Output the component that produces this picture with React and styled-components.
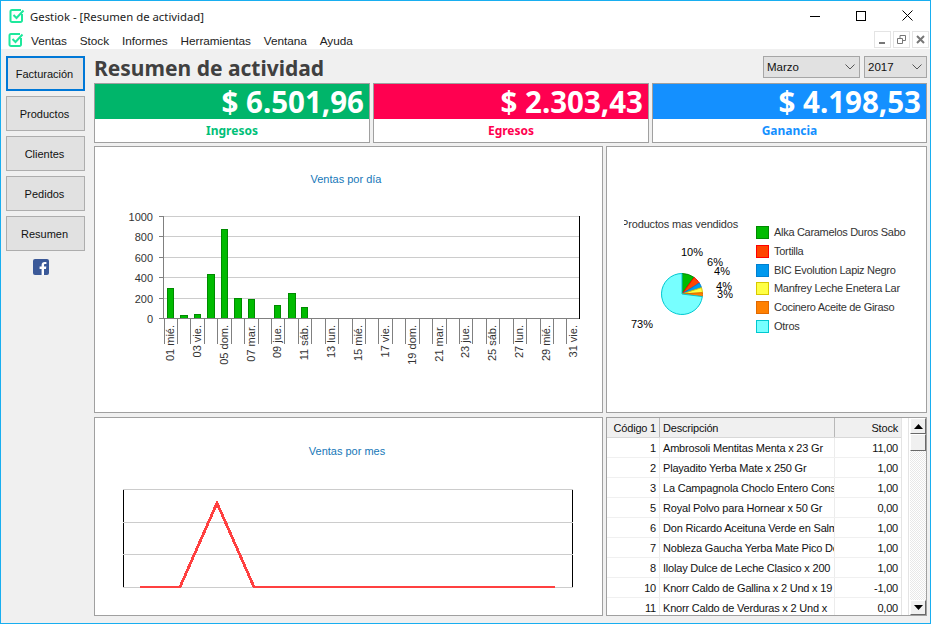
import React from 'react';
import styled, { createGlobalStyle } from 'styled-components';

const UI_FONT = '"Liberation Sans", Arial, sans-serif';
const HEAD_FONT = '"Noto Sans", "DejaVu Sans", sans-serif';

const GlobalStyle = createGlobalStyle`
  html, body { margin: 0; padding: 0; background: #f0f0f0; }
  body { font-family: ${UI_FONT}; font-size: 11px; color: #222; }
  * { box-sizing: border-box; }
`;

const Window = styled.div`
  width: 931px;
  height: 624px;
  border: 1px solid #18aef0;
  display: flex;
  flex-direction: column;
  overflow: hidden;
  background: #fff;
`;

const TitleBar = styled.div`
  height: 29px;
  display: flex;
  align-items: center;
  padding-left: 8px;
  padding-top: 1px;
  background: #fff;
  font-family: ${HEAD_FONT};
  font-size: 11.35px;
`;

const TitleText = styled.span`
  margin-left: 5px;
  flex: 1;
  color: #222;
`;

const WinButton = styled.div`
  width: 46px;
  height: 29px;
  display: flex;
  align-items: center;
  justify-content: center;
  margin-top: -1px;
`;

const MenuBar = styled.div`
  height: 19px;
  display: flex;
  align-items: center;
  padding-left: 7px;
  background: #fff;
`;

const MenuItem = styled.span`
  margin-left: ${p => p.$first ? '7px' : '13px'};
  margin-top: 2px;
  font-size: 11.8px;
  letter-spacing: -0.05px;
  color: #222;
`;

const MdiButtons = styled.div`
  margin-left: auto;
  display: flex;
  gap: 2px;
  margin-right: 1px;
`;

const MdiButton = styled.div`
  width: 17px;
  height: 17px;
  border: 1px solid #e4e4e4;
  display: flex;
  align-items: center;
  justify-content: center;
`;

const Body = styled.div`
  flex: 1;
  display: flex;
  background: #f0f0f0;
  min-height: 0;
`;

const Sidebar = styled.div`
  width: 93px;
  padding: 7px 0 0 5px;
  display: flex;
  flex-direction: column;
  gap: 5px;
`;

const NavButton = styled.div`
  width: 79px;
  height: 35px;
  background: #e1e1e1;
  border: ${p => p.$active ? '2px solid #0078d7' : '1px solid #adadad'};
  display: flex;
  align-items: center;
  justify-content: center;
  padding-right: 2px;
  color: #111;
  font-size: 11px;
`;

const SocialLink = styled.div`
  width: 79px;
  height: 20px;
  padding-left: 27px;
  margin-top: 3px;
`;

const Main = styled.div`
  width: 833px;
  padding-top: 7px;
  display: flex;
  flex-direction: column;
`;

const Header = styled.div`
  height: 22px;
  display: flex;
  align-items: center;
  margin-bottom: 5px;
`;

const Heading = styled.h1`
  margin: 2px 0 0;
  flex: 1;
  font-family: ${HEAD_FONT};
  font-size: 21px;
  line-height: 22px;
  font-weight: 700;
  color: #404040;
`;

const Combo = styled.div`
  width: ${p => p.$w}px;
  height: 22px;
  margin-left: 4px;
  background: #e1e1e1;
  border: 1px solid #a6a6a6;
  display: flex;
  align-items: center;
  justify-content: space-between;
  padding: 0 4px 0 3px;
  font-size: 11.5px;
  color: #111;
`;

const KpiRow = styled.div`
  display: grid;
  grid-template-columns: 276px 276px 275px;
  gap: 3px;
  height: 60px;
  margin-bottom: 3px;
`;

const Kpi = styled.div`
  border: 1px solid #a0a0a0;
  background: #fff;
  display: flex;
  flex-direction: column;
`;

const KpiAmount = styled.div`
  height: 35px;
  background: ${p => p.$color};
  color: #fff;
  font-family: ${HEAD_FONT};
  font-size: 29.5px;
  font-weight: 700;
  line-height: 35px;
  text-align: right;
  padding-right: 5px;
  white-space: nowrap;
`;

const KpiLabel = styled.div`
  flex: 1;
  display: flex;
  align-items: center;
  justify-content: center;
  font-family: ${HEAD_FONT};
  font-size: 12px;
  font-weight: 700;
  color: ${p => p.$color};
`;

const Panels = styled.div`
  display: grid;
  grid-template-columns: 509px 321px;
  grid-template-rows: 267px 199px;
  column-gap: 3px;
  row-gap: 4px;
`;

const Panel = styled.div`
  border: 1px solid #a0a0a0;
  background: #fff;
  overflow: hidden;
  display: flex;
`;

const TableArea = styled.div`
  width: 295px;
  overflow: hidden;
  border-right: 1px solid #e4e4e4;
`;

const Row = styled.div`
  height: 20px;
  display: grid;
  grid-template-columns: 53px 175px 66px;
  background: ${p => p.$head ? '#f0f0f0' : '#fff'};
  border-bottom: 1px solid ${p => p.$head ? '#d8d8d8' : '#f0f0f0'};
`;

const Cell = styled.div`
  line-height: 18px;
  font-size: 11px;
  letter-spacing: -0.2px;
  color: #111;
  padding: 1px 3px 0;
  overflow: hidden;
  white-space: nowrap;
  text-align: ${p => p.$right ? 'right' : 'left'};
  border-right: 1px solid ${p => p.$head ? '#b8b8b8' : '#ececec'};
  &:last-child { border-right: 0; }
`;

const ScrollGutter = styled.div`
  width: 7px;
  margin-right: 1px;
  border-right: 1px solid #e4e4e4;
`;

const ScrollBar = styled.div`
  width: 16px;
  display: flex;
  flex-direction: column;
  background-color: #f4f4f4;
  background-image: repeating-conic-gradient(#fff 0 25%, #e8e8e8 0 50%);
  background-size: 2px 2px;
`;

const ScrollButton = styled.div`
  height: ${p => p.$h}px;
  background: #f0f0f0;
  border: 1px solid;
  border-color: #fff #696969 #696969 #fff;
  display: flex;
  align-items: center;
  justify-content: center;
  margin-top: ${p => p.$push ? 'auto' : '0'};
`;

const Logo = () => (
  <svg width="16" height="16" viewBox="0 0 16 16">
    <path d="M13 6v6.5A1.5 1.5 0 0 1 11.5 14H3a1.5 1.5 0 0 1-1.5-1.5v-9A1.5 1.5 0 0 1 3 2h9" fill="none" stroke="#1ee89c" strokeWidth="2" />
    <path d="M4.5 7l3 3 7-7.5" fill="none" stroke="#1ee89c" strokeWidth="2" />
  </svg>
);

const Chevron = () => (
  <svg width="10" height="6" viewBox="0 0 10 6">
    <path d="M.5.5 5 5 9.5.5" fill="none" stroke="#555" />
  </svg>
);

const Arrow = ({ down }) => (
  <svg width="9" height="5" viewBox="0 0 9 5">
    <path d={down ? 'M0 0h9L4.5 5z' : 'M0 5h9L4.5 0z'} fill="#000" />
  </svg>
);

const Facebook = () => (
  <svg width="16" height="16" viewBox="0 0 16 16">
    <rect width="16" height="16" rx="2" fill="#3b5998" />
    <path d="M11 16v-6h2l.3-2.4H11V6.2c0-.7.2-1.1 1.2-1.1h1.2V3a14 14 0 0 0-1.8-.1C9.8 2.9 8.6 4 8.6 6v1.600h-2V10h2v6z" fill="#fff" />
  </svg>
);

const days = [
  '01 mié.', '03 vie.', '05 dom.', '07 mar.', '09 jue.', '11 sáb.', '13 lun.', '15 mié.',
  '17 vie.', '19 dom.', '21 mar.', '23 jue.', '25 sáb.', '27 lun.', '29 mié.', '31 vie.',
];

const bars = [290, 30, 40, 430, 875, 200, 190, 0, 130, 250, 110];

const DailyChart = () => {
  const x0 = 163.5;
  const step = 13.43;
  const y0 = 318.5;
  return (
    <svg width="507" height="265" viewBox="95 147 507 265">
      <text x="346" y="183" textAnchor="middle" fontSize="11" fill="#1677b8">Ventas por día</text>
      {[0, 1, 2, 3, 4, 5].map(i => {
        const y = Math.round(216 + i * 20.4) + 0.5;
        return (
          <g key={i}>
            {i < 5 && <line x1={x0} x2="579" y1={y} y2={y} stroke="#cccccc" shapeRendering="crispEdges" />}
            <line x1="159" x2={x0} y1={y} y2={y} stroke="#808080" shapeRendering="crispEdges" />
            <text x="153" y={y + 4} textAnchor="end" fontSize="11" fill="#333">{(5 - i) * 200}</text>
          </g>
        );
      })}
      {bars.map((v, i) => v > 0 && (
        <rect key={i} x={Math.round(x0 + i * step + 3.5) + 0.5} y={y0 - v * 0.102} width={i % 2 ? 7 : 6} height={v * 0.102} fill="#00bb00" stroke="#008a00" shapeRendering="crispEdges" />
      ))}
      <line x1={x0} x2={x0} y1="216" y2={y0} stroke="#808080" shapeRendering="crispEdges" />
      <line x1={x0} x2="579.5" y1={y0} y2={y0} stroke="#808080" shapeRendering="crispEdges" />
      <line x1="579.5" x2="579.5" y1="216" y2={y0} stroke="#000" shapeRendering="crispEdges" />
      {days.map((d, i) => {
        const x = 174 + i * 26.86;
        return (
          <text key={d} transform={`translate(${x} 325) rotate(-90)`} textAnchor="end" fontSize="11" fill="#333">{d}</text>
        );
      })}
      {Array.from({ length: 31 }, (_, i) => {
        const x = Math.round(x0 + i * step) + 0.5;
        return <line key={i} x1={x} x2={x} y1={y0} y2="344" stroke="#808080" shapeRendering="crispEdges" />;
      })}
    </svg>
  );
};

const slices = [
  { pct: 10, fill: '#00bb00', stroke: '#008a00', name: 'Alka Caramelos Duros Sabo' },
  { pct: 6, fill: '#ff4400', stroke: '#ff0000', name: 'Tortilla' },
  { pct: 4, fill: '#0099ee', stroke: '#0080d0', name: 'BIC Evolution Lapiz Negro' },
  { pct: 4, fill: '#ffff44', stroke: '#d8c800', name: 'Manfrey Leche Enetera Lar' },
  { pct: 3, fill: '#ff8000', stroke: '#e06800', name: 'Cocinero Aceite de Giraso' },
  { pct: 73, fill: '#77ffff', stroke: '#00c8d0', name: 'Otros' },
];

const pctLabels = [
  { t: '10%', x: 692, y: 256 },
  { t: '6%', x: 715, y: 266 },
  { t: '4%', x: 722, y: 275 },
  { t: '4%', x: 724, y: 290 },
  { t: '3%', x: 725, y: 298 },
  { t: '73%', x: 642, y: 328 },
];

const slicePath = (from, to) => {
  const cx = 682;
  const cy = 294;
  const r = 20.5;
  const a0 = (from / 100) * 2 * Math.PI;
  const a1 = (to / 100) * 2 * Math.PI;
  const p = a => `${(cx + r * Math.sin(a)).toFixed(2)} ${(cy - r * Math.cos(a)).toFixed(2)}`;
  return `M${cx} ${cy}L${p(a0)}A${r} ${r} 0 ${to - from > 50 ? 1 : 0} 1 ${p(a1)}Z`;
};

const PieChart = () => {
  let acc = 0;
  return (
    <svg width="319" height="265" viewBox="607 147 319 265">
      <clipPath id="pieTitle"><rect x="624" y="210" width="130" height="30" /></clipPath>
      <text x="621" y="228" fontSize="11" letterSpacing="-0.15" fill="#333" clipPath="url(#pieTitle)">Productos mas vendidos</text>
      {slices.map(s => {
        const from = acc;
        acc += s.pct;
        return <path key={s.name} d={slicePath(from, acc)} fill={s.fill} stroke={s.stroke} />;
      })}
      {pctLabels.map((l, i) => (
        <text key={i} x={l.x} y={l.y} textAnchor="middle" fontSize="11" fill="#000">{l.t}</text>
      ))}
      {slices.map((s, i) => (
        <g key={s.name}>
          <rect x="756.5" y={Math.round(226 + i * 18.75) + 0.5} width="12" height="12" fill={s.fill} stroke={s.stroke} shapeRendering="crispEdges" />
          <text x="774" y={Math.round(226 + i * 18.75) + 10} fontSize="11" letterSpacing="-0.3" fill="#333">{s.name}</text>
        </g>
      ))}
    </svg>
  );
};

const MonthlyChart = () => (
  <svg width="507" height="197" viewBox="95 418 507 197">
    <text x="347" y="455" textAnchor="middle" fontSize="11" fill="#1677b8">Ventas por mes</text>
    {[489.5, 522.5, 554.5, 587.5].map(y => (
      <line key={y} x1="123" x2="573" y1={y} y2={y} stroke="#cccccc" shapeRendering="crispEdges" />
    ))}
    {[[490, 522], [523, 554], [555, 587]].map(([a, b]) => (
      <g key={a}>
        <line x1="123.5" x2="123.5" y1={a} y2={b} stroke="#000" shapeRendering="crispEdges" />
        <line x1="572.5" x2="572.5" y1={a} y2={b} stroke="#000" shapeRendering="crispEdges" />
      </g>
    ))}
    <polyline points="140,587 180,587 217,503 254,587 555,587" fill="none" stroke="#ff4040" strokeWidth="2.8" shapeRendering="crispEdges" />
  </svg>
);

const products = [
  [1, 'Ambrosoli Mentitas Menta x 23 Gr', '11,00'],
  [2, 'Playadito Yerba Mate x 250 Gr', '1,00'],
  [3, 'La Campagnola Choclo Entero Cons', '1,00'],
  [5, 'Royal Polvo para Hornear x 50 Gr', '0,00'],
  [6, 'Don Ricardo Aceituna Verde en Salmuera', '1,00'],
  [7, 'Nobleza Gaucha Yerba Mate Pico Dorado', '1,00'],
  [8, 'Ilolay Dulce de Leche Clasico x 200', '1,00'],
  [10, 'Knorr Caldo de Gallina x 2 Und x 19', '-1,00'],
  [11, 'Knorr Caldo de Verduras x 2 Und x', '0,00'],
];

const kpis = [
  { amount: '$ 6.501,96', label: 'Ingresos', band: '#00b56a', text: '#00bf78' },
  { amount: '$ 2.303,43', label: 'Egresos', band: '#ff0050', text: '#ff0050' },
  { amount: '$ 4.198,53', label: 'Ganancia', band: '#1490ff', text: '#1490ff' },
];

const nav = ['Facturación', 'Productos', 'Clientes', 'Pedidos', 'Resumen'];
const menus = ['Ventas', 'Stock', 'Informes', 'Herramientas', 'Ventana', 'Ayuda'];

export default function App() {
  return (
    <Window>
      <GlobalStyle />
      <TitleBar>
        <Logo />
        <TitleText>Gestiok - [Resumen de actividad]</TitleText>
        <WinButton>
          <svg width="10" height="10" viewBox="0 0 10 10"><path d="M0 5.5h11" stroke="#000" /></svg>
        </WinButton>
        <WinButton>
          <svg width="10" height="10" viewBox="0 0 10 10"><rect x=".5" y=".5" width="9" height="9" fill="none" stroke="#000" /></svg>
        </WinButton>
        <WinButton>
          <svg width="11" height="11" viewBox="0 0 11 11"><path d="M.5.5l10 10M10.500.5l-10 10" stroke="#000" /></svg>
        </WinButton>
      </TitleBar>
      <MenuBar>
        <Logo />
        {menus.map((m, i) => <MenuItem key={m} $first={i === 0}>{m}</MenuItem>)}
        <MdiButtons>
          <MdiButton>
            <svg width="9" height="9" viewBox="0 0 9 9"><path d="M1 8h6" stroke="#777" strokeWidth="2" /></svg>
          </MdiButton>
          <MdiButton>
            <svg width="9" height="9" viewBox="0 0 9 9"><path d="M.5 3.5h5v5h-5zM3 3V.5h5.500v5H6" fill="none" stroke="#777" /></svg>
          </MdiButton>
          <MdiButton>
            <svg width="9" height="9" viewBox="0 0 9 9"><path d="M1 1l7 7M8 1L1 8" stroke="#777" strokeWidth="2" /></svg>
          </MdiButton>
        </MdiButtons>
      </MenuBar>
      <Body>
        <Sidebar>
          {nav.map((n, i) => <NavButton key={n} $active={i === 0}>{n}</NavButton>)}
          <SocialLink><Facebook /></SocialLink>
        </Sidebar>
        <Main>
          <Header>
            <Heading>Resumen de actividad</Heading>
            <Combo $w={97}>Marzo<Chevron /></Combo>
            <Combo $w={63}>2017<Chevron /></Combo>
          </Header>
          <KpiRow>
            {kpis.map(k => (
              <Kpi key={k.label}>
                <KpiAmount $color={k.band}>{k.amount}</KpiAmount>
                <KpiLabel $color={k.text}>{k.label}</KpiLabel>
              </Kpi>
            ))}
          </KpiRow>
          <Panels>
            <Panel><DailyChart /></Panel>
            <Panel><PieChart /></Panel>
            <Panel><MonthlyChart /></Panel>
            <Panel>
              <TableArea>
                <Row $head>
                  <Cell $head $right>Código 1</Cell>
                  <Cell $head>Descripción</Cell>
                  <Cell $head $right>Stock</Cell>
                </Row>
                {products.map(([code, desc, stock]) => (
                  <Row key={code}>
                    <Cell $right>{code}</Cell>
                    <Cell>{desc}</Cell>
                    <Cell $right>{stock}</Cell>
                  </Row>
                ))}
              </TableArea>
              <ScrollGutter />
              <ScrollBar>
                <ScrollButton $h={16}><Arrow /></ScrollButton>
                <ScrollButton $h={17} />
                <ScrollButton $h={15} $push><Arrow down /></ScrollButton>
              </ScrollBar>
            </Panel>
          </Panels>
        </Main>
      </Body>
    </Window>
  );
}
